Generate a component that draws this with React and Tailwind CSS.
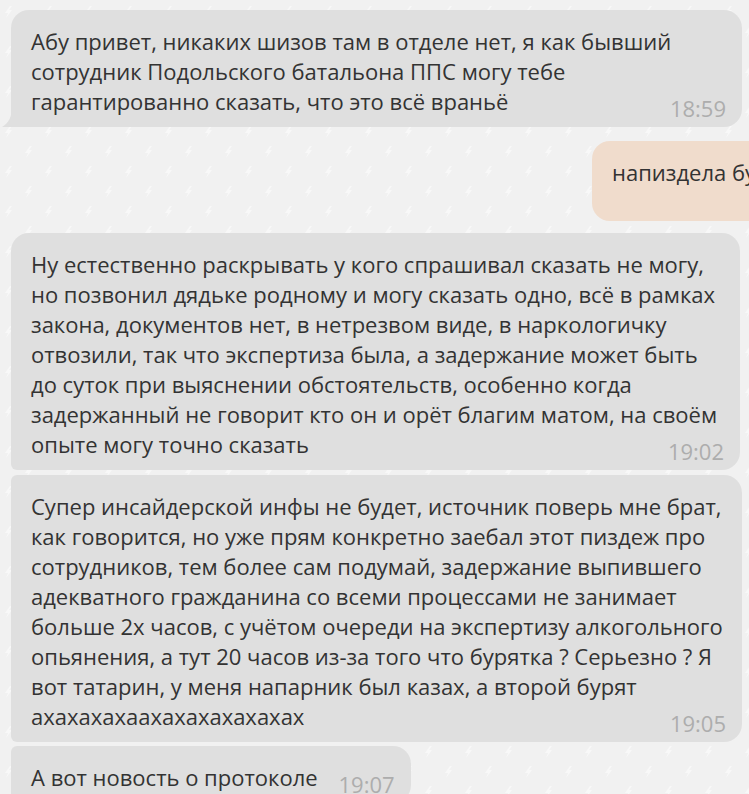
import React from 'react';

const Tail = () => (
  <svg className="absolute -left-[9px] bottom-0" width="10" height="20" viewBox="0 0 10 20">
    <path d="M10 0 C10 9 7 16 0 20 L10 20 Z" fill="#dfdfdf" />
  </svg>
);

const Time = ({ t }) => (
  <span className="absolute right-[16px] bottom-[5px] text-[22px] leading-[28px] text-[#adadad]">{t}</span>
);

const Bubble = ({ lines, time, corners, tail, className = 'w-fit' }) => (
  <div className={`relative ml-[11px] shrink-0 bg-[#dfdfdf] pl-[20px] pr-[15px] pt-[16px] pb-[11px] ${corners} ${className}`}>
    {tail && <Tail />}
    <p className="whitespace-nowrap text-[22px] leading-[30px] text-[#333333]">
      {lines.map((l, i) => (
        <React.Fragment key={i}>
          {l}
          {i < lines.length - 1 ? <br /> : <span className="inline-block w-[78px]" />}
        </React.Fragment>
      ))}
    </p>
    <Time t={time} />
  </div>
);

export default function App() {
  return (
    <div className="relative w-[749px] h-[794px] overflow-hidden bg-[#f1f1f1] font-['Open_Sans','Noto_Sans',sans-serif]">
      <svg className="absolute inset-0 w-full h-full">
        <defs>
          <pattern id="bolt" width="40" height="40" patternUnits="userSpaceOnUse" x="4" y="6">
            <path d="M6 0 L1 7 L4 7 L2 12 L8 4 L5 4 L8 0 Z" fill="#ffffff" opacity="0.5" />
            <path d="M26 20 L21 27 L24 27 L22 32 L28 24 L25 24 L28 20 Z" fill="#ffffff" opacity="0.5" />
          </pattern>
        </defs>
        <rect width="100%" height="100%" fill="url(#bolt)" />
      </svg>

      <div className="relative flex flex-col pt-[10px]">
        <Bubble
          corners="rounded-[18px] rounded-bl-none"
          tail
          time="18:59"
          className="w-[731px]"
          lines={[
            'Абу привет, никаких шизов там в отделе нет, я как бывший',
            'сотрудник Подольского батальона ППС могу тебе',
            'гарантированно сказать, что это всё враньё',
          ]}
        />

        <div className="mt-[14px] ml-[592px] h-[80px] w-[240px] shrink-0 rounded-l-[18px] bg-[#f0dccc] pl-[20px] pt-[16px]">
          <p className="whitespace-nowrap text-[22px] leading-[30px] text-[#333333]">напиздела бу</p>
        </div>

        <Bubble
          corners="rounded-[18px] rounded-bl-[6px]"
          time="19:02"
          className="mt-[12px] w-[729px]"
          lines={[
            'Ну естественно раскрывать у кого спрашивал сказать не могу,',
            'но позвонил дядьке родному и могу сказать одно, всё в рамках',
            'закона, документов нет, в нетрезвом виде, в наркологичку',
            'отвозили, так что экспертиза была, а задержание может быть',
            'до суток при выяснении обстоятельств, особенно когда',
            'задержанный не говорит кто он и орёт благим матом, на своём',
            'опыте могу точно сказать',
          ]}
        />

        <Bubble
          corners="rounded-[18px] rounded-l-[6px]"
          time="19:05"
          className="mt-[5px] w-[731px]"
          lines={[
            'Супер инсайдерской инфы не будет, источник поверь мне брат,',
            'как говорится, но уже прям конкретно заебал этот пиздеж про',
            'сотрудников, тем более сам подумай, задержание выпившего',
            'адекватного гражданина со всеми процессами не занимает',
            'больше 2х часов, с учётом очереди на экспертизу алкогольного',
            'опьянения, а тут 20 часов из-за того что бурятка ? Серьезно ? Я',
            'вот татарин, у меня напарник был казах, а второй бурят',
            'ахахахахаахахахахахахах',
          ]}
        />

        <Bubble
          corners="rounded-[18px] rounded-l-[6px]"
          time="19:07"
          className="mt-[4px] w-fit"
          lines={['А вот новость о протоколе']}
        />
      </div>
    </div>
  );
}
